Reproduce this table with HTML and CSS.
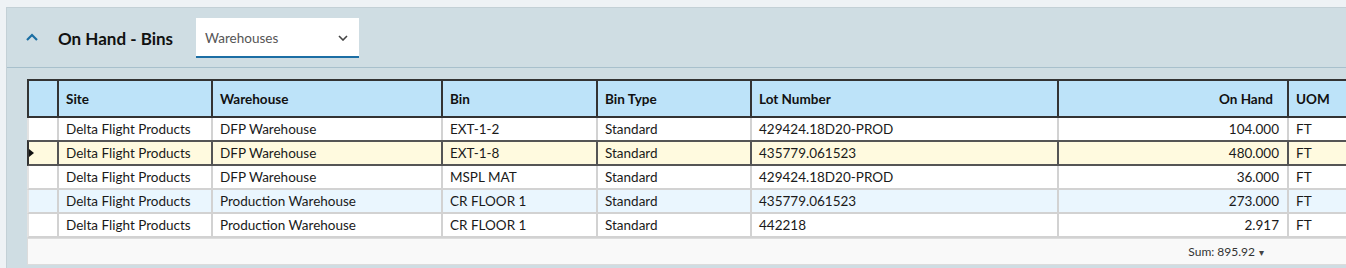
FILE: index.html
```html
<!DOCTYPE html>
<html lang="en">
<head>
  <meta charset="UTF-8">
  <title>On Hand - Bins</title>
  <link rel="stylesheet" href="styles.css">
</head>
<body>
  <div class="panel">
    <div class="panel-header">
      <button class="collapse-btn" aria-label="Collapse">
        <svg width="14" height="9" viewBox="0 0 14 9"><path d="M2 7 L7 2 L12 7" fill="none" stroke="#1b6ea3" stroke-width="2.2"/></svg>
      </button>
      <h2 class="panel-title">On Hand - Bins</h2>
      <div class="select-box">
        <span>Warehouses</span>
        <svg width="10" height="6" viewBox="0 0 10 6"><path d="M1 1 L5 5 L9 1" fill="none" stroke="#444" stroke-width="1.6"/></svg>
      </div>
    </div>

    <div class="grid-wrap">
      <div class="grid">
        <div class="row head">
          <div class="cell ind"></div>
          <div class="cell">Site</div>
          <div class="cell">Warehouse</div>
          <div class="cell">Bin</div>
          <div class="cell">Bin Type</div>
          <div class="cell">Lot Number</div>
          <div class="cell num">On Hand</div>
          <div class="cell">UOM</div>
        </div>

        <div class="row">
          <div class="cell ind"></div>
          <div class="cell">Delta Flight Products</div>
          <div class="cell">DFP Warehouse</div>
          <div class="cell">EXT-1-2</div>
          <div class="cell">Standard</div>
          <div class="cell">429424.18D20-PROD</div>
          <div class="cell num">104.000</div>
          <div class="cell">FT</div>
        </div>
        <div class="row selected">
          <div class="cell ind"><span class="marker"></span></div>
          <div class="cell">Delta Flight Products</div>
          <div class="cell">DFP Warehouse</div>
          <div class="cell">EXT-1-8</div>
          <div class="cell">Standard</div>
          <div class="cell">435779.061523</div>
          <div class="cell num">480.000</div>
          <div class="cell">FT</div>
        </div>
        <div class="row">
          <div class="cell ind"></div>
          <div class="cell">Delta Flight Products</div>
          <div class="cell">DFP Warehouse</div>
          <div class="cell">MSPL MAT</div>
          <div class="cell">Standard</div>
          <div class="cell">429424.18D20-PROD</div>
          <div class="cell num">36.000</div>
          <div class="cell">FT</div>
        </div>
        <div class="row hover">
          <div class="cell ind"></div>
          <div class="cell">Delta Flight Products</div>
          <div class="cell">Production Warehouse</div>
          <div class="cell">CR FLOOR 1</div>
          <div class="cell">Standard</div>
          <div class="cell">435779.061523</div>
          <div class="cell num">273.000</div>
          <div class="cell">FT</div>
        </div>
        <div class="row">
          <div class="cell ind"></div>
          <div class="cell">Delta Flight Products</div>
          <div class="cell">Production Warehouse</div>
          <div class="cell">CR FLOOR 1</div>
          <div class="cell">Standard</div>
          <div class="cell">442218</div>
          <div class="cell num">2.917</div>
          <div class="cell">FT</div>
        </div>

        <div class="row footer">
          <div class="cell ind"></div>
          <div class="cell"></div>
          <div class="cell"></div>
          <div class="cell"></div>
          <div class="cell"></div>
          <div class="cell"></div>
          <div class="cell num sum">Sum: 895.92 <span class="caret">&#9662;</span></div>
          <div class="cell"></div>
        </div>
      </div>
    </div>
  </div>
</body>
</html>
```

FILE: styles.css
```css
  body {
    margin: 0;
    height: 268px;
    background-color: #eef2f5;
    font-family: 'Lato', 'Liberation Sans', sans-serif;
    overflow: hidden;
  }

  .panel {
    margin: 7px 0 0 6px;
    background-color: #cfdde3;
    border-top: 1px solid #c3d0d6;
    border-left: 1px solid #c3d0d6;
    height: 260px;
    overflow: hidden;
  }

  .panel-header {
    display: flex;
    align-items: center;
    height: 59px;
    border-bottom: 1px solid #a8c0cc;
  }

  .collapse-btn {
    border: none;
    background: none;
    padding: 0;
    margin: 0 0 0 18px;
    width: 14px;
    height: 10px;
    display: flex;
    align-items: center;
    justify-content: center;
    cursor: pointer;
  }

  .panel-title {
    margin: 0 0 0 19px;
    font-size: 17px;
    font-weight: 700;
    color: #111;
    width: 138px;
    padding-top: 1px;
  }

  .select-box {
    display: flex;
    align-items: center;
    justify-content: space-between;
    box-sizing: border-box;
    width: 163px;
    height: 40px;
    margin-top: 1px;
    padding: 2px 11px 0 9px;
    background: #ffffff;
    border-bottom: 2px solid #1c6ea4;
    font-size: 13.5px;
    color: #555;
  }

  .grid-wrap {
    padding: 11px 0 0 20px;
  }

  .grid {
    width: 1400px;
  }

  .row {
    display: grid;
    grid-template-columns: 30px 154px 230px 155px 154px 307px 230px 140px;
    height: 24px;
    box-sizing: border-box;
    border-left: 2px solid #e2e2e2;
    border-bottom: 2px solid #d2d2d2;
    background: #ffffff;
    font-size: 13.5px;
    color: #1a1a1a;
  }

  .cell {
    box-sizing: border-box;
    border-right: 2px solid #d2d2d2;
    padding: 0 7px;
    display: flex;
    align-items: center;
    white-space: nowrap;
    overflow: hidden;
  }

  .cell.num {
    justify-content: flex-end;
    padding-right: 8px;
  }

  .row.head {
    height: 39px;
    background: #bde3f9;
    border: 2px solid #333;
    border-right: none;
    font-weight: 700;
    color: #111;
  }

  .row.head .cell {
    border-right-color: #333;
    padding-top: 1px;
  }

  .row.head .cell.num {
    padding-right: 14px;
  }

  .row.selected {
    height: 26px;
    margin-top: -2px;
    background: #fffadf;
    border-top: 2px solid #555;
    border-bottom-color: #555;
    border-left-color: #333;
  }

  .row.selected .cell {
    border-right-color: #555;
  }

  .row.hover {
    background: #eaf6fe;
  }

  .marker {
    width: 0;
    height: 0;
    margin-left: -7px;
    border-top: 4px solid transparent;
    border-bottom: 4px solid transparent;
    border-left: 5px solid #111;
  }

  .row.footer {
    height: 27px;
    background: #f9f9f9;
    border-top: 1px solid #dcdcdc;
    border-left: 1px solid #dcdcdc;
    border-bottom: 1px solid #dcdcdc;
  }

  .row.footer .cell {
    border-right: none;
  }

  .sum {
    font-size: 12px;
    color: #333;
    padding-right: 24px !important;
    gap: 4px;
  }

  .caret {
    font-size: 10px;
    color: #444;
  }
```
